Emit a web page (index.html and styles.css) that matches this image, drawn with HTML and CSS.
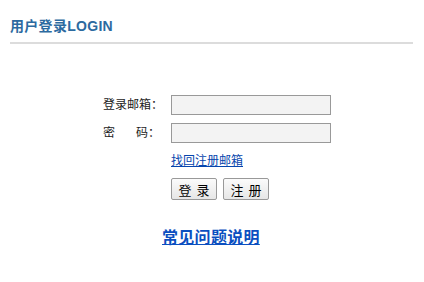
FILE: index.html
```html
<!DOCTYPE html>
<html lang="zh-CN">
<head>
  <meta charset="UTF-8" />
  <title>用户登录</title>
  <link rel="stylesheet" href="styles.css">
</head>
<body>

  <div class="header">
    <h2 class="title">用户登录LOGIN</h2>
  </div>

  <form class="login-form">
    <div class="row">
      <label for="email">登录邮箱：</label>
      <input type="text" id="email" />
    </div>
    <div class="row">
      <label for="pwd" class="spread"><span>密</span><span>码：</span></label>
      <input type="password" id="pwd" />
    </div>
    <div class="row link-row">
      <span></span>
      <a href="#" class="find-link">找回注册邮箱</a>
    </div>
    <div class="row buttons">
      <span></span>
      <div class="btn-group">
        <button type="submit">登 录</button>
        <button type="button">注 册</button>
      </div>
    </div>
  </form>

  <div class="faq">
    <a href="#">常见问题说明</a>
  </div>

</body>
</html>
```

FILE: styles.css
```css
* {
  box-sizing: border-box;
  margin: 0;
  padding: 0;
}

body {
  font-family: "Liberation Sans", "Noto Sans CJK SC", sans-serif;
  font-size: 12px;
  color: #222;
  background: #fff;
}

.header {
  margin: 0 11px 0 10px;
  padding-top: 17px;
  padding-bottom: 7px;
  border-bottom: 2px solid #dcdcdc;
}

.title {
  font-size: 14px;
  line-height: 18px;
  font-weight: bold;
  color: #2c6aa0;
  letter-spacing: 0.3px;
}

.login-form {
  margin-top: 51px;
  margin-left: 103px;
  display: flex;
  flex-direction: column;
  gap: 8px;
}

.row {
  display: grid;
  grid-template-columns: 68px 160px;
  align-items: center;
  height: 20px;
}

.row label {
  font-size: 12px;
  line-height: 20px;
}

.spread {
  display: flex;
  justify-content: space-between;
  width: 57px;
}

.row input {
  width: 160px;
  height: 20px;
  border: 1px solid #999;
  background: #f3f3f3;
  font-size: 12px;
  padding: 0 3px;
}

.link-row {
  height: 18px;
  align-items: end;
}

.find-link {
  color: #0645ad;
  font-size: 12px;
  line-height: 16px;
}

.buttons {
  height: 22px;
  margin-top: 1px;
}

.btn-group {
  display: flex;
  gap: 6px;
}

.btn-group button {
  width: 46px;
  height: 22px;
  font-family: "Noto Sans CJK SC", sans-serif;
  font-size: 13px;
  word-spacing: 2px;
  color: #000;
  background: linear-gradient(#fbfbfb, #e6e6e6);
  border: 1px solid #999;
  border-radius: 2px;
  cursor: pointer;
}

.faq {
  margin-top: 28px;
  margin-left: 162px;
}

.faq a {
  font-size: 16px;
  font-weight: bold;
  color: #0b4fc0;
  line-height: 20px;
  letter-spacing: 0.3px;
}
```
